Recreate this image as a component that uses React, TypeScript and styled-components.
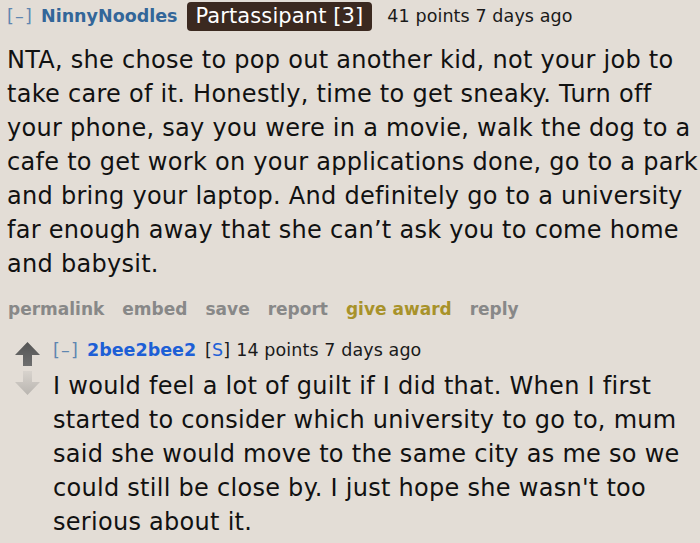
import React from 'react';
import styled, {createGlobalStyle} from 'styled-components';

const GlobalStyle = createGlobalStyle`
    html, body {
        margin: 0;
        padding: 0;
        background: #e3ddd6;
    }
    body {
        font-family: 'DejaVu Sans', Verdana, sans-serif;
        color: #111;
    }
`;

const Page = styled.div`
    width: 700px;
    height: 543px;
    overflow: hidden;
    padding: 0 0 0 7px;
    box-sizing: border-box;
`;

const Tagline = styled.div`
    display: flex;
    align-items: center;
    height: 32px;
    font-size: 17.5px;
    letter-spacing: 0.1px;
    white-space: nowrap;
`;

const Expand = styled.span`
    color: #5f86b0;
    margin-right: 8px;
    letter-spacing: 1.2px;
`;

const Author = styled.span<{$submitter?: boolean}>`
    font-weight: bold;
    letter-spacing: 0;
    color: ${(p) => (p.$submitter ? '#1d5fd6' : '#336699')};
    margin-right: 9px;
`;

const Flair = styled.span`
    display: inline-flex;
    align-items: center;
    height: 29px;
    padding: 0 9px;
    border-radius: 4px;
    background: #3b2920;
    color: #fff;
    font-size: 21px;
    letter-spacing: 0.1px;
    margin: 0 15px 0 0;
`;

const Meta = styled.span`
    color: #1a1a1a;
`;

const SubmitterTag = styled.span`
    margin-right: 6px;
    color: #1a1a1a;

    b {
        font-weight: normal;
        color: #1d5fd6;
    }
`;

const Body = styled.p`
    margin: 11px 0 0;
    width: 693px;
    font-size: 24px;
    letter-spacing: 0.28px;
    line-height: 34px;
`;

const Actions = styled.ul`
    display: flex;
    gap: 18px;
    list-style: none;
    margin: 16px 0 0;
    padding: 0 0 0 1px;
    font-size: 17px;
    line-height: 24px;
    font-weight: bold;
`;

const Action = styled.li<{$gold?: boolean}>`
    color: ${(p) => (p.$gold ? '#a8922a' : '#888')};
`;

const Child = styled.div`
    display: flex;
    margin-top: 13px;
`;

const Votes = styled.div`
    display: flex;
    flex-direction: column;
    align-items: center;
    gap: 5px;
    width: 40px;
    padding-top: 8px;
    flex-shrink: 0;
`;

const ChildMain = styled.div`
    flex: 1;
    margin-left: 6px;
`;

const ChildBody = styled(Body)`
    margin-top: 3px;
    width: 628px;
`;

const Arrow = ({down}: {down?: boolean}) => (
    <svg
        width='25'
        height='24'
        viewBox='0 0 25 24'
        style={down ? {transform: 'scaleY(-1)'} : undefined}
    >
        <defs>
            <linearGradient id={down ? 'dg' : 'ug'} x1='0' y1='0' x2='0' y2='1'>
                <stop offset='0' stopColor={down ? '#b9b5b0' : '#555'}/>
                <stop offset='1' stopColor={down ? '#d8d3cd' : '#6e6e6e'}/>
            </linearGradient>
        </defs>
        <path
            d='M12.5 0 L25 13 L17 13 L17 24 L8 24 L8 13 L0 13 Z'
            fill={`url(#${down ? 'dg' : 'ug'})`}
        />
    </svg>
);

export default function App() {
    return (
        <Page>
            <GlobalStyle/>
            <Tagline>
                <Expand>{'[–]'}</Expand>
                <Author>{'NinnyNoodles'}</Author>
                <Flair>{'Partassipant [3]'}</Flair>
                <Meta>{'41 points 7 days ago'}</Meta>
            </Tagline>
            <Body>
                {'NTA, she chose to pop out another kid, not your job to take care of it. Honestly, time to get sneaky. Turn off your phone, say you were in a movie, walk the dog to a cafe to get work on your applications done, go to a park and bring your laptop. And definitely go to a university far enough away that she can’t ask you to come home and babysit.'}
            </Body>
            <Actions>
                <Action>{'permalink'}</Action>
                <Action>{'embed'}</Action>
                <Action>{'save'}</Action>
                <Action>{'report'}</Action>
                <Action $gold>{'give award'}</Action>
                <Action>{'reply'}</Action>
            </Actions>
            <Child>
                <Votes>
                    <Arrow/>
                    <Arrow down/>
                </Votes>
                <ChildMain>
                    <Tagline>
                        <Expand>{'[–]'}</Expand>
                        <Author $submitter>{'2bee2bee2'}</Author>
                        <SubmitterTag>{'['}<b>{'S'}</b>{']'}</SubmitterTag>
                        <Meta>{'14 points 7 days ago'}</Meta>
                    </Tagline>
                    <ChildBody>
                        {"I would feel a lot of guilt if I did that. When I first started to consider which university to go to, mum said she would move to the same city as me so we could still be close by. I just hope she wasn't too serious about it."}
                    </ChildBody>
                </ChildMain>
            </Child>
        </Page>
    );
}
